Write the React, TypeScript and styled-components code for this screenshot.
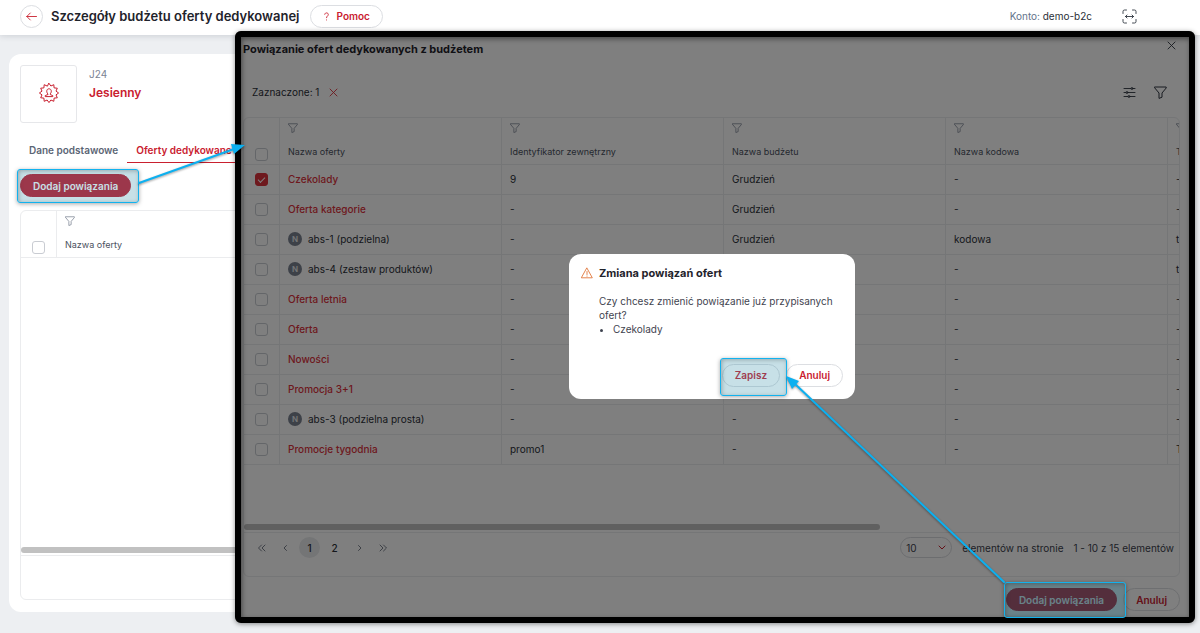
import React from "react";
import styled, { createGlobalStyle } from "styled-components";

const red = "#c9202f";
const brightRed = "#dc323c";
const fill = "#c4182a";
const line = "#ebecee";
const ink = "#2b2f38";

const Global = createGlobalStyle`
  *, *::before, *::after { box-sizing: border-box; }
  body {
    margin: 0;
    background: #edeff2;
    color: ${ink};
    font: 400 10px/14px Inter, "Liberation Sans", sans-serif;
    overflow: hidden;
  }
  button, select, input { font: inherit; color: inherit; margin: 0; }
  h1, h2, p, ul { margin: 0; }
  svg { display: block; fill: none; stroke: currentColor; stroke-linecap: round; stroke-linejoin: round; }
`;

const Page = styled.div`
  position: relative;
  display: flex;
  flex-direction: column;
  min-height: 100vh;
`;

const TopBar = styled.header`
  display: flex;
  align-items: center;
  height: 35px;
  padding: 0 63px 3px 20px;
  background: #fff;
  box-shadow: 0 1px 6px rgba(40, 50, 70, 0.16);
`;

const PageTitle = styled.h1`
  margin: 0 10px 0 8px;
  font-size: 13px;
  line-height: 20px;
  font-weight: 600;
  color: #1f232b;
`;

const Account = styled.span`
  margin-left: auto;
  margin-right: 30px;
  color: #64748b;
  span { color: ${ink}; }
`;

const IconButton = styled.button<{ $color?: string }>`
  display: flex;
  padding: 0;
  border: 0;
  background: none;
  color: ${(p) => p.$color ?? "#2f3540"};
`;

const RoundButton = styled(IconButton)`
  align-items: center;
  justify-content: center;
  width: 23px;
  height: 23px;
  border: 1px solid #dcdee2;
  border-radius: 50%;
`;

const Pill = styled.button<{ $filled?: boolean }>`
  display: inline-flex;
  align-items: center;
  gap: 7px;
  height: 23px;
  padding: 0 12px;
  border: 1px solid ${(p) => (p.$filled ? fill : "#dcdee2")};
  border-radius: 12px;
  background: ${(p) => (p.$filled ? fill : "#fff")};
  color: ${(p) => (p.$filled ? "#fff" : red)};
  font-weight: 600;
  white-space: nowrap;
`;

const Card = styled.main`
  flex: 1;
  display: flex;
  flex-direction: column;
  margin: 19px 9px 21px;
  padding: 11px 11px 12px;
  border-radius: 12px;
  background: #fff;
`;

const Summary = styled.div`
  display: flex;
  gap: 12px;
`;

const Thumb = styled.div`
  display: grid;
  place-items: center;
  width: 57px;
  height: 58px;
  padding-bottom: 2px;
  border: 1px solid #e6e7ea;
  border-radius: 3px;
  color: ${red};
`;

const Code = styled.p`
  padding-top: 2px;
  color: #7c8494;
`;

const Name = styled.p`
  padding-top: 4px;
  font-size: 12px;
  line-height: 16px;
  font-weight: 600;
  color: ${red};
`;

const Tabs = styled.nav`
  display: flex;
  margin-top: 16px;
`;

const Tab = styled.a<{ $active?: boolean }>`
  padding: 4px 9px 5px;
  border-bottom: 1px solid ${(p) => (p.$active ? red : "transparent")};
  color: ${(p) => (p.$active ? red : "#5b6575")};
  font-weight: 600;
  text-decoration: none;
`;

const Actions = styled.div`
  padding: 11px 0 13px;
`;

const TableBox = styled.section`
  flex: 1;
  display: flex;
  flex-direction: column;
  overflow: hidden;
  border: 1px solid ${line};
  border-radius: 6px;
`;

const Scroller = styled.div`
  flex: 1;
  overflow: hidden;
`;

const ScrollBar = styled.div<{ $width: string }>`
  width: ${(p) => p.$width};
  height: 6px;
  border-radius: 3px;
  background: #c1c1c1;
`;

const BoxFooter = styled.div`
  display: flex;
  align-items: flex-start;
  justify-content: space-between;
  height: 44px;
  margin-top: 2px;
  padding: 4px 5px 0;
  border-top: 1px solid ${line};
`;

const Grid = styled.table`
  width: 1146px;
  table-layout: fixed;
  border-collapse: separate;
  border-spacing: 0;
`;

const HeadCell = styled.th`
  height: 47px;
  padding: 5px 8px 3px;
  border-bottom: 1px solid ${line};
  border-right: 1px solid ${line};
  text-align: left;
  vertical-align: top;
  font-size: 9px;
  line-height: 12px;
  font-weight: 400;
  color: #4b5261;
  svg { margin-bottom: 13px; color: #7c8494; }
  input { margin: 25px 3px 0; }
`;

const Cell = styled.td`
  height: 30px;
  padding: 0 8px 1px;
  border-bottom: 1px solid ${line};
  border-right: 1px solid ${line};
  vertical-align: middle;
  input { margin: 0 3px; }
`;

const CheckBox = styled.input`
  appearance: none;
  display: block;
  width: 13px;
  height: 13px;
  border: 1px solid #c9ccd2;
  border-radius: 3px;
  background: #fff;
  &:checked {
    border-color: ${brightRed};
    background: ${brightRed};
  }
  &:checked::after {
    content: "";
    display: block;
    width: 7px;
    height: 4px;
    margin: 3px 2px;
    border: solid #fff;
    border-width: 0 0 1px 1px;
    transform: rotate(-45deg);
  }
`;

const OfferLink = styled.a`
  color: ${brightRed};
  font-weight: 500;
  text-decoration: none;
`;

const Offer = styled.span`
  display: flex;
  align-items: center;
  gap: 6px;
`;

const Badge = styled.span`
  display: grid;
  place-items: center;
  width: 14px;
  height: 14px;
  border-radius: 50%;
  background: #7b8290;
  color: #eceef0;
  font-size: 8px;
  line-height: 10px;
  font-weight: 600;
`;

const Panel = styled.section`
  position: absolute;
  top: 31px;
  right: 5px;
  bottom: 10px;
  left: 235px;
  display: flex;
  flex-direction: column;
  padding: 10px 15px 12px 8px;
  border-radius: 6px;
  background: #fff;
`;

const PanelHead = styled.div`
  display: flex;
  justify-content: space-between;
  align-items: flex-start;
  padding-right: 4px;
  h2 { font-size: 11px; line-height: 16px; font-weight: 700; color: #1f232b; }
`;

const Toolbar = styled.div`
  display: flex;
  align-items: center;
  gap: 10px;
  height: 34px;
  margin: 18px 0 8px;
  padding: 0 13px 0 9px;
`;

const ToolbarEnd = styled.div`
  display: flex;
  gap: 18px;
  margin-left: auto;
`;

const Pager = styled.nav`
  display: flex;
  align-items: center;
  color: #6b7280;
`;

const PageButton = styled.button<{ $current?: boolean }>`
  display: grid;
  place-items: center;
  width: 24px;
  height: 21px;
  padding: 0;
  border: 0;
  border-radius: 11px;
  background: ${(p) => (p.$current ? "#e9eaec" : "none")};
  color: inherit;
`;

const PageNumber = styled(PageButton)`
  color: ${ink};
  width: 21px;
  margin: 0 2px;
  font-weight: 500;
`;

const PageInfo = styled.div`
  display: flex;
  align-items: center;
  gap: 10px;
  color: #3c424e;
`;

const SelectWrap = styled.span`
  position: relative;
  svg { position: absolute; right: 6px; top: 8px; color: ${red}; }
`;

const SizeSelect = styled.select`
  appearance: none;
  width: 52px;
  height: 21px;
  padding: 0 5px;
  border: 1px solid #d8dade;
  border-radius: 11px;
  background: #fff;
`;

const PanelFooter = styled.footer`
  display: flex;
  justify-content: flex-end;
  gap: 6px;
  padding-top: 11px;
`;

const Backdrop = styled.div`
  position: absolute;
  top: 31px;
  right: 5px;
  bottom: 10px;
  left: 235px;
  display: grid;
  place-items: center;
  padding: 0 6px 2px 0;
  border-radius: 6px;
  background: rgba(0, 0, 0, 0.5);
`;

const Confirm = styled.div`
  display: grid;
  grid-template-columns: 12px 1fr;
  gap: 13px 6px;
  width: 286px;
  padding: 12px;
  border-radius: 12px;
  background: #fff;
  > svg { margin-top: 1px; color: #e0763a; }
  h2 { font-size: 11px; line-height: 15px; font-weight: 700; color: #1f232b; }
`;

const ConfirmBody = styled.div`
  grid-column: 2;
  color: #3f4450;
  ul { padding-left: 14px; line-height: 15px; }
`;

const ConfirmActions = styled.div`
  grid-column: 1 / 3;
  display: flex;
  justify-content: flex-end;
  gap: 6px;
  margin-top: 14px;
`;

const Frame = styled.div`
  position: absolute;
  top: 31px;
  right: 5px;
  bottom: 10px;
  left: 235px;
  border: 6px solid #000;
  border-radius: 6px;
  box-shadow: 0 1px 5px rgba(0, 0, 0, 0.45), inset 1px 2px 5px rgba(0, 0, 0, 0.45);
  pointer-events: none;
`;

const Marker = styled.div<{ $x: number; $y: number; $w: number; $h: number }>`
  position: absolute;
  left: ${(p) => p.$x}px;
  top: ${(p) => p.$y}px;
  width: ${(p) => p.$w}px;
  height: ${(p) => p.$h}px;
  border: 1px solid #12b2ee;
  border-radius: 3px;
  background: rgba(47, 140, 165, 0.27);
  box-shadow: 0 1px 4px rgba(0, 0, 0, 0.35), inset 1px 1px 4px rgba(0, 0, 0, 0.25);
  pointer-events: none;
`;

const Arrows = styled.svg`
  position: absolute;
  top: 0;
  left: 0;
  pointer-events: none;
  filter: drop-shadow(0 1px 1px rgba(0, 0, 0, 0.4));
`;

const Funnel = ({ size = 10 }: { size?: number }) => (
  <svg width={size} height={size} viewBox="0 0 13 13" aria-hidden="true">
    <path d="M.8 1h11.4v1L8 7v4.2L5 12.4V7L.8 2z" />
  </svg>
);

const Cross = ({ size = 9 }: { size?: number }) => (
  <svg width={size} height={size} viewBox="0 0 9 9" strokeWidth=".9" aria-hidden="true">
    <path d="M1 1l7 7M8 1L1 8" />
  </svg>
);

const Chevron = ({ left, double }: { left?: boolean; double?: boolean }) => (
  <svg width="9" height="8" viewBox="0 0 9 8" strokeWidth=".9" aria-hidden="true">
    <g transform={left ? "matrix(-1 0 0 1 9 0)" : undefined}>
      {double ? <path d="M1 1l3 3-3 3M4.500 1l3 3-3 3" /> : <path d="M3.500 1.500L6 4 3.500 6.500" />}
    </g>
  </svg>
);

const gear = Array.from({ length: 24 }, (_, i) => {
  const r = i % 2 ? 7.2 : 9.6;
  const a = (i * Math.PI) / 12;
  return `${(10 + r * Math.sin(a)).toFixed(1)},${(10 - r * Math.cos(a)).toFixed(1)}`;
}).join(" ");

type Row = { name: string; plain?: boolean; checked?: boolean; id: string; budget: string; code: string; type: string };

const rows: Row[] = [
  { name: "Czekolady", checked: true, id: "9", budget: "Grudzień", code: "-", type: "-" },
  { name: "Oferta kategorie", id: "-", budget: "Grudzień", code: "-", type: "-" },
  { name: "abs-1 (podzielna)", plain: true, id: "-", budget: "Grudzień", code: "kodowa", type: "t" },
  { name: "abs-4 (zestaw produktów)", plain: true, id: "-", budget: "-", code: "-", type: "t" },
  { name: "Oferta letnia", id: "-", budget: "-", code: "-", type: "-" },
  { name: "Oferta", id: "-", budget: "-", code: "-", type: "-" },
  { name: "Nowości", id: "-", budget: "-", code: "-", type: "-" },
  { name: "Promocja 3+1", id: "-", budget: "-", code: "-", type: "-" },
  { name: "abs-3 (podzielna prosta)", plain: true, id: "-", budget: "-", code: "-", type: "-" },
  { name: "Promocje tygodnia", id: "promo1", budget: "-", code: "-", type: "T" },
];

const OfferTable = ({ heads, data, label }: { heads: string[]; data: Row[]; label: string }) => (
  <Grid aria-label={label}>
    <colgroup>
      <col style={{ width: 36 }} />
      {heads.map((h) => <col key={h} />)}
    </colgroup>
    <thead>
      <tr>
        <HeadCell scope="col"><CheckBox type="checkbox" aria-label="Zaznacz wszystkie" /></HeadCell>
        {heads.map((h) => <HeadCell scope="col" key={h}><Funnel />{h}</HeadCell>)}
      </tr>
    </thead>
    <tbody>
      {data.map((r) => (
        <tr key={r.name}>
          <Cell><CheckBox type="checkbox" defaultChecked={r.checked} aria-label={r.name} /></Cell>
          <Cell>
            {r.plain ? <Offer><Badge>N</Badge>{r.name}</Offer> : <OfferLink href="#">{r.name}</OfferLink>}
          </Cell>
          <Cell>{r.id}</Cell>
          <Cell>{r.budget}</Cell>
          <Cell>{r.code}</Cell>
          <Cell>{r.type}</Cell>
        </tr>
      ))}
    </tbody>
  </Grid>
);

export default function App() {
  return (
    <Page>
      <Global />
      <TopBar>
        <RoundButton $color={red} aria-label="Wstecz">
          <svg width="11" height="9" viewBox="0 0 11 9" strokeWidth=".9"><path d="M10.500 4.500H.8M4.300 1L.8 4.500 4.300 8" /></svg>
        </RoundButton>
        <PageTitle>Szczegóły budżetu oferty dedykowanej</PageTitle>
        <Pill>
          <svg width="7" height="9" viewBox="0 0 7 9" strokeWidth=".9"><path d="M1.700 2.300C1.700.3 5.300.4 5.300 2.500 5.300 4 3.500 4 3.500 5.700M3.500 7.900v.1" /></svg>
          Pomoc
        </Pill>
        <Account>Konto: <span>demo-b2c</span></Account>
        <IconButton aria-label="Szerokość strony">
          <svg width="15" height="15" viewBox="0 0 15 15" strokeWidth=".9">
            <path d="M1 4.500V2.500Q1 1 2.500 1h2M10.500 1h2Q14 1 14 2.500v2M14 10.500v2q0 1.500-1.500 1.500h-2M4.500 14h-2Q1 14 1 12.500v-2M3.500 7.500h8M5 6L3.500 7.500 5 9M10 6l1.500 1.500L10 9" />
          </svg>
        </IconButton>
      </TopBar>

      <Card>
        <Summary>
          <Thumb>
            <svg width="20" height="20" viewBox="0 0 20 20">
              <polygon points={gear} />
              <path d="M8.700 10.800C6.800 8.500 7.800 5.800 10 5.800s3.200 2.700 1.300 5v.8l2.500 1v1H6.200v-1l2.500-1z" />
            </svg>
          </Thumb>
          <div>
            <Code>J24</Code>
            <Name>Jesienny</Name>
          </div>
        </Summary>
        <Tabs>
          <Tab href="#">Dane podstawowe</Tab>
          <Tab href="#" $active>Oferty dedykowane</Tab>
        </Tabs>
        <Actions><Pill $filled>Dodaj powiązania</Pill></Actions>
        <TableBox>
          <Scroller>
            <OfferTable
              label="Oferty budżetu"
              heads={["Nazwa oferty"]}
              data={[]}
            />
          </Scroller>
          <ScrollBar $width="60%" />
          <BoxFooter />
        </TableBox>
      </Card>

      <Panel>
        <PanelHead>
          <h2>Powiązanie ofert dedykowanych z budżetem</h2>
          <IconButton aria-label="Zamknij"><Cross /></IconButton>
        </PanelHead>
        <Toolbar>
          <span>Zaznaczone: 1</span>
          <IconButton $color={brightRed} aria-label="Wyczyść zaznaczenie"><Cross /></IconButton>
          <ToolbarEnd>
            <IconButton aria-label="Kolumny">
              <svg width="13" height="13" viewBox="0 0 13 13" strokeWidth=".9">
                <path d="M1 2.500h7M10 2.500h2M1 6.500h2M5 6.500h7M1 10.500h4M7 10.500h5" />
                <circle cx="9" cy="2.500" r="1" /><circle cx="4" cy="6.500" r="1" /><circle cx="6" cy="10.500" r="1" />
              </svg>
            </IconButton>
            <IconButton aria-label="Filtry"><Funnel size={13} /></IconButton>
          </ToolbarEnd>
        </Toolbar>
        <TableBox>
          <Scroller>
            <OfferTable
              label="Oferty dedykowane"
              heads={["Nazwa oferty", "Identyfikator zewnętrzny", "Nazwa budżetu", "Nazwa kodowa", "Typ"]}
              data={rows}
            />
          </Scroller>
          <ScrollBar $width="68%" />
          <BoxFooter>
            <Pager aria-label="Strony">
              <PageButton aria-label="Pierwsza"><Chevron left double /></PageButton>
              <PageButton aria-label="Poprzednia"><Chevron left /></PageButton>
              <PageNumber $current>1</PageNumber>
              <PageNumber>2</PageNumber>
              <PageButton aria-label="Następna"><Chevron /></PageButton>
              <PageButton aria-label="Ostatnia"><Chevron double /></PageButton>
            </Pager>
            <PageInfo>
              <SelectWrap>
                <SizeSelect aria-label="Elementów na stronie"><option>10</option></SizeSelect>
                <svg width="8" height="5" viewBox="0 0 8 5"><path d="M1 1l3 3 3-3" /></svg>
              </SelectWrap>
              <span>elementów na stronie</span>
              <span>1 - 10 z 15 elementów</span>
            </PageInfo>
          </BoxFooter>
        </TableBox>
        <PanelFooter>
          <Pill $filled>Dodaj powiązania</Pill>
          <Pill>Anuluj</Pill>
        </PanelFooter>
      </Panel>

      <Backdrop>
        <Confirm role="dialog" aria-labelledby="confirm-title">
          <svg width="12" height="12" viewBox="0 0 12 12" strokeWidth=".9"><path d="M6 1.200L11.300 10.800H.7zM6 4.500v3M6 9v.2" /></svg>
          <h2 id="confirm-title">Zmiana powiązań ofert</h2>
          <ConfirmBody>
            <p>Czy chcesz zmienić powiązanie już przypisanych ofert?</p>
            <ul><li>Czekolady</li></ul>
          </ConfirmBody>
          <ConfirmActions>
            <Pill>Zapisz</Pill>
            <Pill>Anuluj</Pill>
          </ConfirmActions>
        </Confirm>
      </Backdrop>
      <Frame />

      <Marker $x={17} $y={169} $w={122} $h={34} />
      <Marker $x={720} $y={358} $w={67} $h={38} />
      <Marker $x={1004} $y={582} $w={122} $h={36} />
      <Arrows width="1200" height="633" viewBox="0 0 1200 633" aria-hidden="true">
        <g stroke="#0cb0f0" strokeWidth="2" fill="#0cb0f0">
          <path d="M139 183L234 149M1004 582L794 383" />
          <path stroke="none" d="M245 145L234 154 231 144zM786 376L799 381 792 389z" />
        </g>
      </Arrows>
    </Page>
  );
}
